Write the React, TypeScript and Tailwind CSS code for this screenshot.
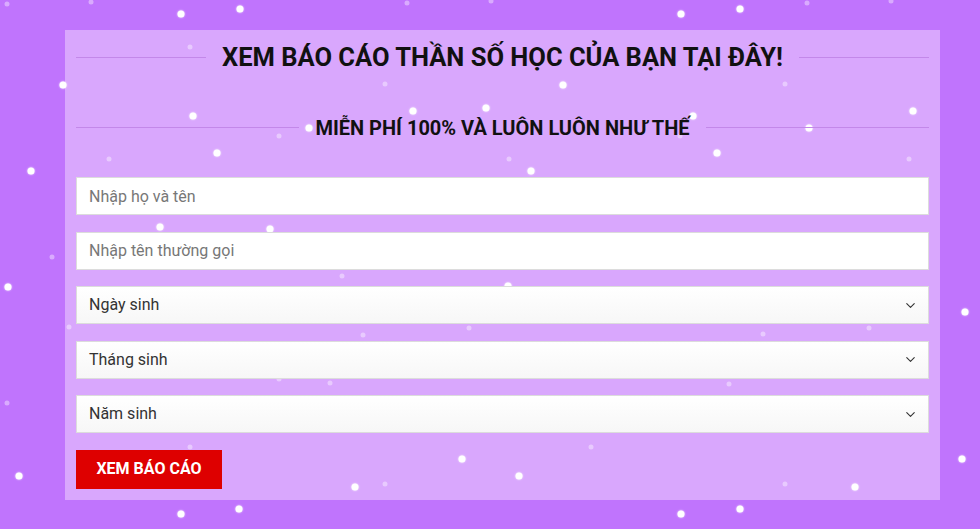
import { ChevronDown } from "lucide-react";

// snowflakes: [x, y, bright]
const FLAKES: [number, number, boolean][] = [
  [7, 4, false], [91, 2, false], [181, 14, true], [240, 9, true], [407, 3, false],
  [491, 1, false], [681, 14, true], [740, 9, true], [807, 3, false], [891, 1, false],
  [63, 85, true], [190, 47, false], [385, 84, false], [563, 85, true], [785, 84, false],
  [193, 116, true], [413, 111, true], [486, 108, true], [693, 116, true], [913, 111, true],
  [309, 128, true], [809, 128, true], [279, 136, false], [680, 136, false],
  [217, 153, true], [717, 153, true], [109, 159, false], [509, 159, false], [909, 159, false],
  [31, 171, true], [531, 171, true], [160, 227, true], [270, 229, true], [52, 257, false],
  [342, 276, false], [8, 287, true], [508, 286, true], [965, 312, true], [69, 327, false],
  [363, 335, false], [469, 328, false], [763, 334, false], [869, 328, false],
  [279, 379, false], [330, 383, false], [729, 384, false], [7, 403, false],
  [190, 447, false], [591, 447, false], [462, 459, true], [962, 459, true],
  [19, 476, true], [519, 476, true], [355, 487, true], [855, 487, true],
  [385, 484, false], [785, 484, false], [181, 514, true], [239, 509, true],
  [681, 514, true], [740, 509, true],
];

const Snow = () => (
  <div className="pointer-events-none absolute inset-0 z-10">
    {FLAKES.map(([x, y, bright], i) =>
      bright ? (
        <span
          key={i}
          className="absolute h-[7px] w-[7px] -translate-x-1/2 -translate-y-1/2 rounded-full bg-white shadow-[0_0_2px_rgba(255,255,255,0.9)]"
          style={{ left: x, top: y }}
        />
      ) : (
        <span
          key={i}
          className="absolute h-[5px] w-[5px] -translate-x-1/2 -translate-y-1/2 rounded-full bg-white/40 blur-[0.5px]"
          style={{ left: x, top: y }}
        />
      )
    )}
  </div>
);

const Heading = ({ text, className }: { text: string; className: string }) => (
  <div className={`flex items-center gap-4 ${className}`}>
    <div className="h-px flex-1 bg-[#c388e9]" />
    <h2 className="font-bold text-[#111] whitespace-nowrap">{text}</h2>
    <div className="h-px flex-1 bg-[#c388e9]" />
  </div>
);

const TextField = ({ placeholder }: { placeholder: string }) => (
  <input
    type="text"
    placeholder={placeholder}
    className="mb-[16.5px] block h-[38px] w-full border border-[#dcdcdc] bg-white px-3 text-[16px] text-[#333] placeholder:text-[#777] outline-none"
  />
);

const SelectField = ({ label }: { label: string }) => (
  <div className="mb-[16.5px] flex h-[38px] w-full items-center justify-between border border-[#dcdcdc] bg-gradient-to-b from-white to-[#f7f7f7] pl-3 pr-[10px] text-[16px] text-[#333]">
    <span>{label}</span>
    <ChevronDown size={15} strokeWidth={1.75} className="text-[#333]" />
  </div>
);

export default function App() {
  return (
    <div
      className="relative min-h-screen overflow-hidden bg-[#c074fd] pt-[30px]"
      style={{ fontFamily: "Roboto, 'Noto Sans', sans-serif" }}
    >
      <div className="ml-[65px] w-[875px] bg-[#d9a7fd] px-[11px] pt-[11px] pb-[11px]">
        <div className="relative z-20">
          <Heading text="XEM BÁO CÁO THẦN SỐ HỌC CỦA BẠN TẠI ĐÂY!" className="h-[33px] text-[25.5px]" />
          <Heading text="MIỄN PHÍ 100% VÀ LUÔN LUÔN NHƯ THẾ" className="mt-[41px] h-[25px] text-[20px]" />
          <form className="mt-[37px]">
            <TextField placeholder="Nhập họ và tên" />
            <TextField placeholder="Nhập tên thường gọi" />
            <SelectField label="Ngày sinh" />
            <SelectField label="Tháng sinh" />
            <SelectField label="Năm sinh" />
            <button
              type="button"
              className="h-[39px] w-[146px] bg-[#de0000] text-[16px] font-bold text-white"
            >
              XEM BÁO CÁO
            </button>
          </form>
        </div>
      </div>
      <Snow />
    </div>
  );
}
